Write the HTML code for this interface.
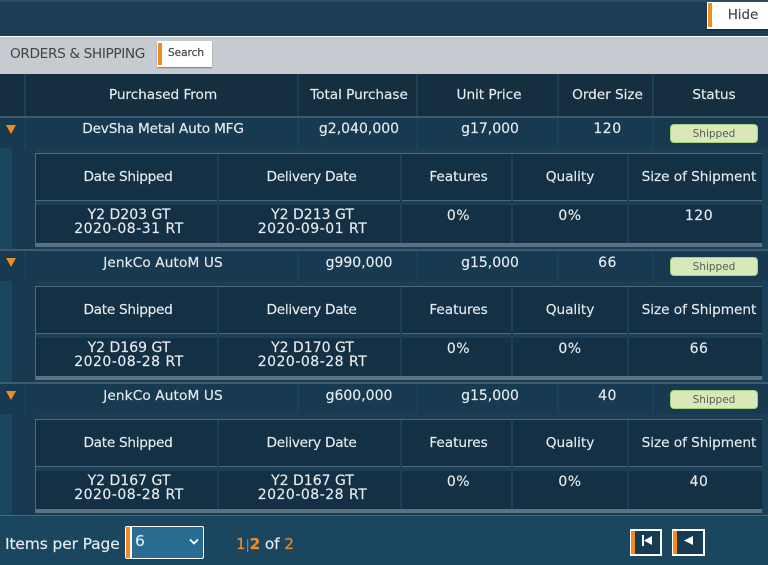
<!DOCTYPE html>
<html><head><meta charset="utf-8">
<style>
html,body{margin:0;padding:0;width:768px;height:565px;overflow:hidden;background:#1c3d54;}
*{box-sizing:border-box;}
body{position:relative;font-family:"DejaVu Sans",sans-serif;font-size:14px;color:#e6ecef;}
.a{position:absolute;}
.t{position:absolute;text-align:center;white-space:nowrap;line-height:16px;font-size:13.7px;letter-spacing:-.06px;-webkit-text-stroke:.15px #e6ecef;}
.n{font-size:14px;letter-spacing:.5px;}
.m{font-size:14px;letter-spacing:0;}
.d{letter-spacing:-.3px;}
.y{letter-spacing:0;}
.r{letter-spacing:-.2px;}
.j{letter-spacing:.1px;}
.g{position:absolute;left:0;width:768px;height:133px;}
.v{position:absolute;width:2px;background:#1b4058;}
.tri{position:absolute;left:6px;top:9px;width:0;height:0;border-left:5px solid transparent;border-right:5px solid transparent;border-top:9px solid #f28a22;}
.pill{position:absolute;left:670px;top:8px;width:88px;height:19px;background:#d8e8b8;border:1px solid #a5cf7a;border-radius:4px;color:#55605a;font-size:10.5px;line-height:18px;text-align:center;}
.l2{line-height:14px;}
</style></head><body>
<div class="a" style="left:0;top:0;width:768px;height:2px;background:#2a4c63"></div>
<div class="a" style="left:707px;top:2px;width:61px;height:27px;background:#fff;box-shadow:0 1px 1px #0006"></div>
<div class="a" style="left:708px;top:3px;width:4px;height:24px;background:#f28a22"></div>
<div class="t" style="left:712px;width:62px;top:7px;color:#444;-webkit-text-stroke:.15px #444;font-size:13.5px">Hide</div>
<div class="a" style="left:0;top:36px;width:768px;height:1px;background:#fff"></div>
<div class="a" style="left:0;top:37px;width:768px;height:37px;background:#c5cbd0"></div>
<div class="t" style="left:10px;top:46px;color:#444;-webkit-text-stroke:0;font-size:13.7px;letter-spacing:-.38px">ORDERS &amp; SHIPPING</div>
<div class="a" style="left:157px;top:41px;width:55px;height:26px;background:#fff;box-shadow:0 1px 1px #0006"></div>
<div class="a" style="left:158px;top:43px;width:4px;height:22px;background:#f28a22"></div>
<div class="t" style="left:168px;top:45px;color:#444;-webkit-text-stroke:.2px #444;font-size:10.5px;letter-spacing:0">Search</div>

<div class="a" style="left:0;top:74px;width:768px;height:42px;background:#152f40"></div>
<div class="v" style="left:24px;top:74px;height:42px"></div>
<div class="v" style="left:297px;top:74px;height:42px"></div>
<div class="v" style="left:416px;top:74px;height:42px"></div>
<div class="v" style="left:557px;top:74px;height:42px"></div>
<div class="v" style="left:652px;top:74px;height:42px"></div>
<div class="t" style="left:27px;width:272px;top:87px">Purchased From</div>
<div class="t" style="left:299px;width:120px;top:87px">Total Purchase</div>
<div class="t" style="left:418px;width:142px;top:87px">Unit Price</div>
<div class="t" style="left:559px;width:97px;top:87px">Order Size</div>
<div class="t" style="left:655px;width:118px;top:87px">Status</div>

<!-- group 1 -->
<div class="g" style="top:116px">
<div class="a" style="left:0;top:0;width:768px;height:2px;background:#3d5c70"></div>
<div class="a" style="left:0;top:2px;width:768px;height:30px;background:#183a50"></div>
<div class="v" style="left:24px;top:2px;height:30px"></div><div class="v" style="left:297px;top:2px;height:30px"></div><div class="v" style="left:416px;top:2px;height:30px"></div><div class="v" style="left:557px;top:2px;height:30px"></div><div class="v" style="left:652px;top:2px;height:30px"></div>
<div class="tri"></div>
<div class="t r" style="left:27px;width:272px;top:5px">DevSha Metal Auto MFG</div>
<div class="t m" style="left:299px;width:120px;top:5px">g2,040,000</div>
<div class="t m" style="left:419px;width:142px;top:5px">g17,000</div>
<div class="t n" style="left:559px;width:97px;top:5px">120</div>
<div class="pill">Shipped</div>
<div class="a" style="left:0;top:32px;width:12px;height:101px;background:#1a4660"></div>
<div class="a" style="left:12px;top:32px;width:24px;height:101px;background:#173a50"></div>
<div class="a" style="left:35px;top:37px;width:727px;height:94px;background:#143044;border:1px solid #4d6b7d;border-right:0"></div>
<div class="a" style="left:762px;top:32px;width:6px;height:101px;background:#1b4058"></div>
<div class="a" style="left:36px;top:84px;width:726px;height:1px;background:#4d6b7d"></div>
<div class="a" style="left:36px;top:85px;width:726px;height:4px;background:#1b3f56"></div>
<div class="a" style="left:36px;top:127px;width:726px;height:4px;background:#5b7281"></div>
<div class="v" style="left:217px;top:38px;height:89px"></div><div class="v" style="left:400px;top:38px;height:89px"></div><div class="v" style="left:511px;top:38px;height:89px"></div><div class="v" style="left:627px;top:38px;height:89px"></div>
<div class="t d" style="left:37px;width:182px;top:53px">Date Shipped</div>
<div class="t d" style="left:220px;width:183px;top:53px">Delivery Date</div>
<div class="t" style="left:403px;width:111px;top:53px">Features</div>
<div class="t" style="left:514px;width:112px;top:53px">Quality</div>
<div class="t" style="left:630px;width:138px;top:53px">Size of Shipment</div>
<div class="t l2 n" style="left:37px;width:184px;top:92px"><span class="y">Y2 D203 GT</span><br>2020-08-31 RT</div>
<div class="t l2 n" style="left:221px;width:183px;top:92px"><span class="y">Y2 D213 GT</span><br>2020-09-01 RT</div>
<div class="t n" style="left:403px;width:111px;top:92px">0%</div>
<div class="t n" style="left:514px;width:112px;top:92px">0%</div>
<div class="t n" style="left:630px;width:138px;top:92px">120</div>
</div>

<!-- group 2 -->
<div class="g" style="top:249px">
<div class="a" style="left:0;top:0;width:768px;height:2px;background:#3d5c70"></div>
<div class="a" style="left:0;top:2px;width:768px;height:30px;background:#183a50"></div>
<div class="v" style="left:24px;top:2px;height:30px"></div><div class="v" style="left:297px;top:2px;height:30px"></div><div class="v" style="left:416px;top:2px;height:30px"></div><div class="v" style="left:557px;top:2px;height:30px"></div><div class="v" style="left:652px;top:2px;height:30px"></div>
<div class="tri"></div>
<div class="t j" style="left:27px;width:272px;top:6px">JenkCo AutoM US</div>
<div class="t m" style="left:299px;width:120px;top:6px">g990,000</div>
<div class="t m" style="left:419px;width:142px;top:6px">g15,000</div>
<div class="t n" style="left:559px;width:97px;top:6px">66</div>
<div class="pill">Shipped</div>
<div class="a" style="left:0;top:32px;width:12px;height:101px;background:#1a4660"></div>
<div class="a" style="left:12px;top:32px;width:24px;height:101px;background:#173a50"></div>
<div class="a" style="left:35px;top:37px;width:727px;height:94px;background:#143044;border:1px solid #4d6b7d;border-right:0"></div>
<div class="a" style="left:762px;top:32px;width:6px;height:101px;background:#1b4058"></div>
<div class="a" style="left:36px;top:84px;width:726px;height:1px;background:#4d6b7d"></div>
<div class="a" style="left:36px;top:85px;width:726px;height:4px;background:#1b3f56"></div>
<div class="a" style="left:36px;top:127px;width:726px;height:4px;background:#5b7281"></div>
<div class="v" style="left:217px;top:38px;height:89px"></div><div class="v" style="left:400px;top:38px;height:89px"></div><div class="v" style="left:511px;top:38px;height:89px"></div><div class="v" style="left:627px;top:38px;height:89px"></div>
<div class="t d" style="left:37px;width:182px;top:53px">Date Shipped</div>
<div class="t d" style="left:220px;width:183px;top:53px">Delivery Date</div>
<div class="t" style="left:403px;width:111px;top:53px">Features</div>
<div class="t" style="left:514px;width:112px;top:53px">Quality</div>
<div class="t" style="left:630px;width:138px;top:53px">Size of Shipment</div>
<div class="t l2 n" style="left:37px;width:184px;top:92px"><span class="y">Y2 D169 GT</span><br>2020-08-28 RT</div>
<div class="t l2 n" style="left:221px;width:183px;top:92px"><span class="y">Y2 D170 GT</span><br>2020-08-28 RT</div>
<div class="t n" style="left:403px;width:111px;top:92px">0%</div>
<div class="t n" style="left:514px;width:112px;top:92px">0%</div>
<div class="t n" style="left:630px;width:138px;top:92px">66</div>
</div>

<!-- group 3 -->
<div class="g" style="top:382px">
<div class="a" style="left:0;top:0;width:768px;height:2px;background:#3d5c70"></div>
<div class="a" style="left:0;top:2px;width:768px;height:30px;background:#183a50"></div>
<div class="v" style="left:24px;top:2px;height:30px"></div><div class="v" style="left:297px;top:2px;height:30px"></div><div class="v" style="left:416px;top:2px;height:30px"></div><div class="v" style="left:557px;top:2px;height:30px"></div><div class="v" style="left:652px;top:2px;height:30px"></div>
<div class="tri"></div>
<div class="t j" style="left:27px;width:272px;top:6px">JenkCo AutoM US</div>
<div class="t m" style="left:299px;width:120px;top:6px">g600,000</div>
<div class="t m" style="left:419px;width:142px;top:6px">g15,000</div>
<div class="t n" style="left:559px;width:97px;top:6px">40</div>
<div class="pill">Shipped</div>
<div class="a" style="left:0;top:32px;width:12px;height:101px;background:#1a4660"></div>
<div class="a" style="left:12px;top:32px;width:24px;height:101px;background:#173a50"></div>
<div class="a" style="left:35px;top:37px;width:727px;height:94px;background:#143044;border:1px solid #4d6b7d;border-right:0"></div>
<div class="a" style="left:762px;top:32px;width:6px;height:101px;background:#1b4058"></div>
<div class="a" style="left:36px;top:84px;width:726px;height:1px;background:#4d6b7d"></div>
<div class="a" style="left:36px;top:85px;width:726px;height:4px;background:#1b3f56"></div>
<div class="a" style="left:36px;top:127px;width:726px;height:4px;background:#5b7281"></div>
<div class="v" style="left:217px;top:38px;height:89px"></div><div class="v" style="left:400px;top:38px;height:89px"></div><div class="v" style="left:511px;top:38px;height:89px"></div><div class="v" style="left:627px;top:38px;height:89px"></div>
<div class="t d" style="left:37px;width:182px;top:53px">Date Shipped</div>
<div class="t d" style="left:220px;width:183px;top:53px">Delivery Date</div>
<div class="t" style="left:403px;width:111px;top:53px">Features</div>
<div class="t" style="left:514px;width:112px;top:53px">Quality</div>
<div class="t" style="left:630px;width:138px;top:53px">Size of Shipment</div>
<div class="t l2 n" style="left:37px;width:184px;top:92px"><span class="y">Y2 D167 GT</span><br>2020-08-28 RT</div>
<div class="t l2 n" style="left:221px;width:183px;top:92px"><span class="y">Y2 D167 GT</span><br>2020-08-28 RT</div>
<div class="t n" style="left:403px;width:111px;top:92px">0%</div>
<div class="t n" style="left:514px;width:112px;top:92px">0%</div>
<div class="t n" style="left:630px;width:138px;top:92px">40</div>
</div>

<!-- footer -->
<div class="a" style="left:0;top:515px;width:768px;height:50px;background:#1a4660;border-top:1px solid #3f6b82"></div>
<div class="t" style="left:5px;top:536px;font-size:15.500px;letter-spacing:-.13px">Items per Page</div>
<div class="a" style="left:125px;top:526px;width:79px;height:33px;background:#2a6b92;border:1px solid #fff;border-radius:2px"></div>
<div class="a" style="left:126px;top:527px;width:6px;height:31px;background:#f28a22;border-right:2px solid #fff"></div>
<div class="t" style="left:135px;top:533px;font-size:15.500px;color:#dfe8ed">6</div>
<svg class="a" style="left:188px;top:538px" width="12" height="8" viewBox="0 0 12 8"><path d="M2 1.500L6 5.500L10 1.500" fill="none" stroke="#fff" stroke-width="1.800"/></svg>
<div class="t" style="left:236px;top:536px;font-size:15.300px;letter-spacing:-.1px;color:#f28a22;-webkit-text-stroke:.15px #f28a22">1<span style="color:#7f99a8;font-size:12px;-webkit-text-stroke:0">|</span><b>2</b> <span style="color:#e6ecef;-webkit-text-stroke:.15px #e6ecef">of</span> 2</div>
<div class="a" style="left:630px;top:529px;width:32px;height:27px;background:#163c54;border:2px solid #fff;border-left-width:1px"></div>
<div class="a" style="left:631px;top:531px;width:4px;height:23px;background:#f28a22"></div>
<svg class="a" style="left:640px;top:534px" width="16" height="16" viewBox="0 0 16 16"><path d="M2 1h2v11H2zM4 6.500L12 2v9z" fill="#fff"/></svg>
<div class="a" style="left:672px;top:529px;width:33px;height:27px;background:#163c54;border:2px solid #fff;border-left-width:1px"></div>
<div class="a" style="left:673px;top:531px;width:4px;height:23px;background:#f28a22"></div>
<svg class="a" style="left:684px;top:534px" width="16" height="16" viewBox="0 0 16 16"><path d="M0 6.500L9 2v9z" fill="#fff"/></svg>
</body></html>
